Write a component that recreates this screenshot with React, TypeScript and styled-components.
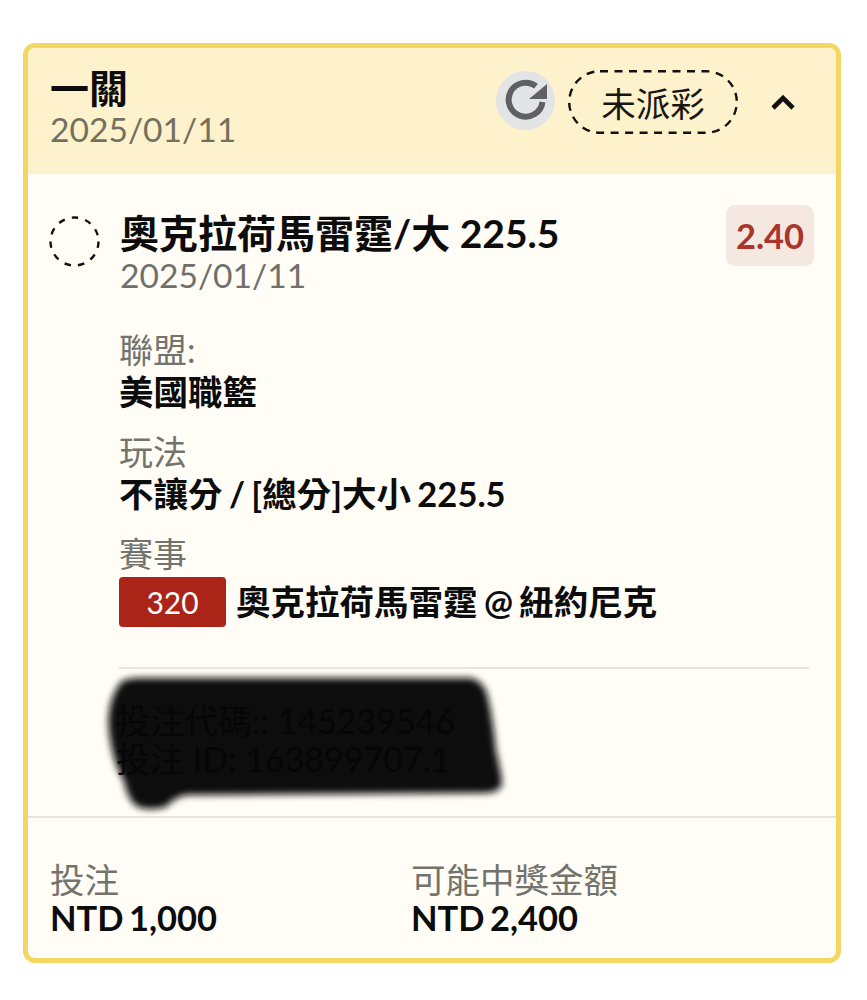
import styled, { createGlobalStyle } from 'styled-components';

const GlobalStyle = createGlobalStyle`
  html, body {
    margin: 0;
    padding: 0;
    background: #ffffff;
    font-family: Lato, "Noto Sans CJK TC", sans-serif;
  }
`;

function App() {
  return (
    <Page>
      <GlobalStyle />
      <Card>
        <Header>
          <HeaderText>
            <HeaderTitle>一關</HeaderTitle>
            <HeaderDate>2025/01/11</HeaderDate>
          </HeaderText>
          <HeaderActions>
            <RefreshButton>
              <svg width="46" height="46" viewBox="0 0 46 46" fill="none">
                <path d="M39.5 25A17 17 0 1 1 33 9.2" stroke="#5f6063" strokeWidth="6" />
                <path d="M44 7V22H26Z" fill="#5f6063" />
              </svg>
            </RefreshButton>
            <StatusPill>
              <svg width="170" height="64" viewBox="0 0 170 64" fill="none">
                <rect x="1.2" y="1.2" width="167.6" height="61.6" rx="30.8" stroke="#111" strokeWidth="2.4" strokeDasharray="8 6.5" />
              </svg>
              <StatusLabel>未派彩</StatusLabel>
            </StatusPill>
            <ChevronButton>
              <svg width="26" height="18" viewBox="0 0 26 18" fill="none">
                <path d="M3 15L13 5L23 15" stroke="#111" strokeWidth="4.6" />
              </svg>
            </ChevronButton>
          </HeaderActions>
        </Header>

        <Body>
          <SelectionRow>
            <DashedCircle>
              <svg width="51" height="51" viewBox="0 0 51 51" fill="none">
                <circle cx="25.5" cy="25.5" r="24" stroke="#111" strokeWidth="2.4" strokeDasharray="6.5 7.2" />
              </svg>
            </DashedCircle>
            <SelectionText>
              <SelectionTitle>奧克拉荷馬雷霆/大 225.5</SelectionTitle>
              <SelectionDate>2025/01/11</SelectionDate>
            </SelectionText>
            <OddsBadge>2.40</OddsBadge>
          </SelectionRow>

          <Details>
            <DetailGroup>
              <DetailLabel>聯盟:</DetailLabel>
              <DetailValue>美國職籃</DetailValue>
            </DetailGroup>
            <DetailGroup>
              <DetailLabel>玩法</DetailLabel>
              <DetailValue>不讓分 / [總分]大小 225.5</DetailValue>
            </DetailGroup>
            <DetailGroup>
              <DetailLabel>賽事</DetailLabel>
              <MatchRow>
                <MatchCode>320</MatchCode>
                <DetailValue>奧克拉荷馬雷霆 @ 紐約尼克</DetailValue>
              </MatchRow>
            </DetailGroup>
            <Divider />
            <BetIds>
              <Redaction viewBox="0 0 420 150" width="420" height="150">
                <defs>
                  <filter id="smear" x="-10%" y="-10%" width="120%" height="120%">
                    <feGaussianBlur stdDeviation="3.6" />
                  </filter>
                </defs>
                <path
                  d="M22 10Q30 7 40 7H370Q380 8 386 20Q392 40 396 80Q402 105 402 114Q398 122 385 122L85 124Q72 128 66 136Q50 140 38 136Q28 130 24 110Q12 90 9 60Q6 30 22 10Z"
                  fill="#111111"
                  filter="url(#smear)"
                />
              </Redaction>
              <BetIdLine>投注代碼:: 145239546</BetIdLine>
              <BetIdLine>投注 ID: 163899707.1</BetIdLine>
            </BetIds>
          </Details>
        </Body>

        <Footer>
          <FooterColumn>
            <FooterLabel>投注</FooterLabel>
            <FooterValue>NTD 1,000</FooterValue>
          </FooterColumn>
          <FooterColumn>
            <FooterLabel>可能中獎金額</FooterLabel>
            <FooterValue>NTD 2,400</FooterValue>
          </FooterColumn>
        </Footer>
      </Card>
    </Page>
  );
}

export default App;

const Page = styled.div`
  width: 867px;
  height: 1000px;
  padding: 43px 26px 0 23px;
  box-sizing: border-box;
  overflow: hidden;
`;

const Card = styled.div`
  width: 818px;
  height: 920px;
  box-sizing: border-box;
  border: 5px solid #f2d862;
  border-radius: 12px;
  background: #fffdf6;
  display: flex;
  flex-direction: column;
  overflow: hidden;
`;

const Header = styled.div`
  height: 126px;
  flex: none;
  box-sizing: border-box;
  padding: 18px 40px 0 22px;
  background: #fdf2cb;
  display: flex;
  justify-content: space-between;
  align-items: flex-start;
`;

const HeaderText = styled.div`
  display: flex;
  flex-direction: column;
`;

const HeaderTitle = styled.div`
  font-size: 39px;
  line-height: 44px;
  font-weight: 700;
  color: #0c0c0c;
`;

const HeaderDate = styled.div`
  font-size: 33.6px;
  line-height: 38px;
  color: #73705f;
`;

const HeaderActions = styled.div`
  display: flex;
  align-items: center;
  margin-top: 4px;
`;

const RefreshButton = styled.div`
  width: 59px;
  height: 59px;
  margin-bottom: 4px;
  border-radius: 50%;
  background: #e3e4e6;
  display: flex;
  align-items: center;
  justify-content: center;
`;

const StatusPill = styled.div`
  position: relative;
  width: 170px;
  height: 64px;
  margin-left: 13px;
  display: flex;
  align-items: center;
  justify-content: center;

  svg {
    position: absolute;
    inset: 0;
  }
`;

const StatusLabel = styled.span`
  font-size: 34.5px;
  color: #161616;
`;

const ChevronButton = styled.div`
  width: 26px;
  margin-left: 32px;
  display: flex;
`;

const Body = styled.div`
  flex: 1;
  box-sizing: border-box;
  padding: 31px 22px 0 21px;
`;

const SelectionRow = styled.div`
  display: flex;
  align-items: flex-start;
`;

const DashedCircle = styled.div`
  width: 51px;
  height: 51px;
  margin-top: 11px;
  flex: none;
`;

const SelectionText = styled.div`
  flex: 1;
  margin: 6px 0 0 20px;
`;

const SelectionTitle = styled.div`
  font-size: 39px;
  line-height: 45px;
  font-weight: 700;
  color: #0c0c0c;
`;

const SelectionDate = styled.div`
  font-size: 33.6px;
  line-height: 38px;
  color: #6f6f6b;
`;

const OddsBadge = styled.div`
  width: 88px;
  height: 61px;
  border-radius: 9px;
  background: #f5e8e1;
  color: #ab342b;
  font-size: 34.5px;
  font-weight: 700;
  display: flex;
  align-items: center;
  justify-content: center;
`;

const Details = styled.div`
  margin: 37px 5px 0 70px;
`;

const DetailGroup = styled.div`
  margin-bottom: 18px;
`;

const DetailLabel = styled.div`
  font-size: 34px;
  line-height: 38px;
  color: #73736d;
`;

const DetailValue = styled.div`
  font-size: 34.5px;
  line-height: 46px;
  font-weight: 700;
  word-spacing: -2px;
  color: #0c0c0c;
`;

const MatchRow = styled.div`
  display: flex;
  align-items: center;
  gap: 10px;
  margin-top: 4px;
`;

const MatchCode = styled.div`
  width: 107px;
  height: 50px;
  border-radius: 4px;
  background: #ab2418;
  color: #ffffff;
  font-size: 30px;
  display: flex;
  align-items: center;
  justify-content: center;
`;

const Divider = styled.div`
  height: 2px;
  margin-top: 40px;
  background: #e6e5de;
`;

const BetIds = styled.div`
  position: relative;
  margin: 33px 0 0 -3px;
`;

const BetIdLine = styled.div`
  position: relative;
  font-size: 34px;
  line-height: 38px;
  color: #060606;
  white-space: nowrap;
`;

const Redaction = styled.svg`
  position: absolute;
  left: -16px;
  top: -31px;
`;

const Footer = styled.div`
  height: 142px;
  flex: none;
  box-sizing: border-box;
  border-top: 2px solid #e6e5de;
  padding: 43px 22px 0 22px;
  display: flex;
`;

const FooterColumn = styled.div`
  width: 361px;
`;

const FooterLabel = styled.div`
  font-size: 34.5px;
  line-height: 38px;
  color: #73736d;
`;

const FooterValue = styled.div`
  font-size: 34.5px;
  line-height: 37px;
  font-weight: 700;
  word-spacing: -3px;
  color: #0c0c0c;
`;
